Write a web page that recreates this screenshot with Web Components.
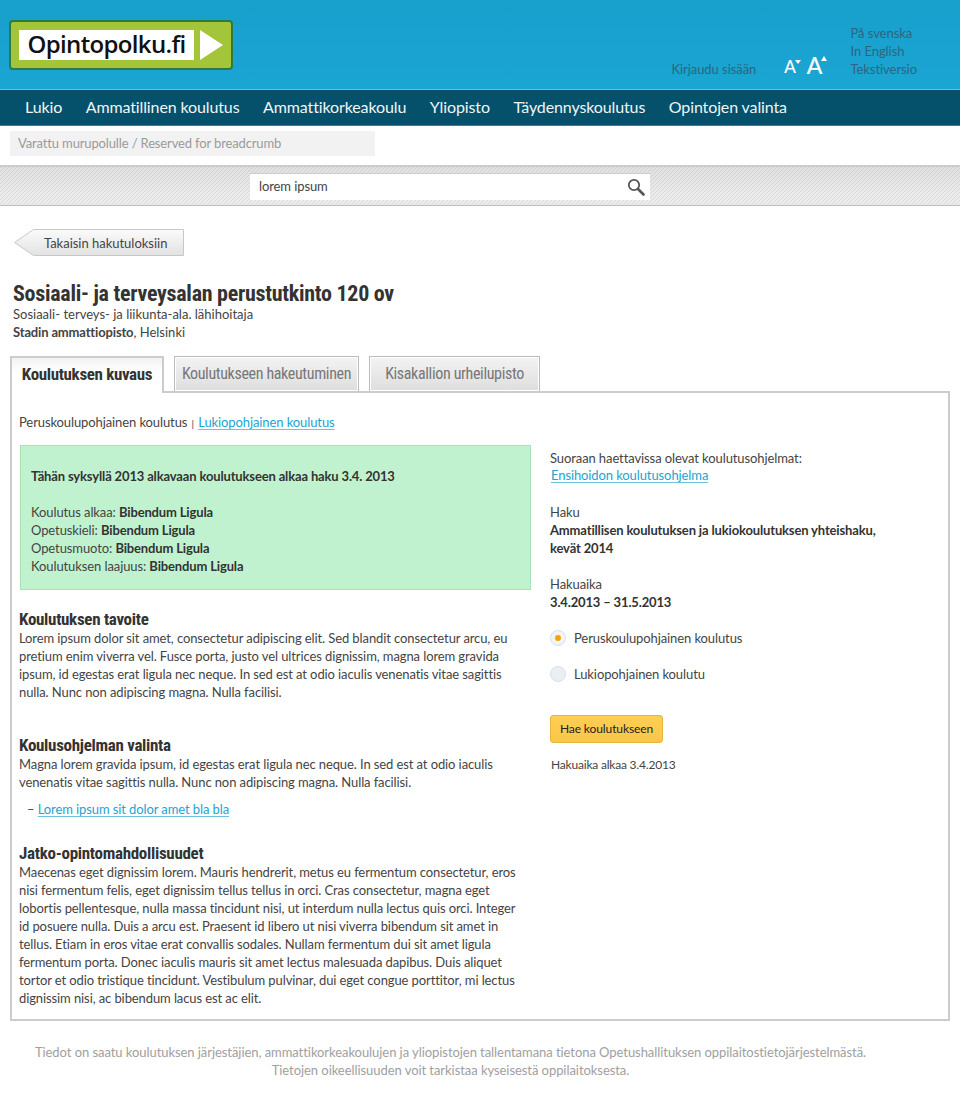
<!doctype html>
<html lang="fi"><head><meta charset="utf-8"><title>Opintopolku</title>
<style>
html,body{margin:0;padding:0;background:#fff}
body{font:13px/18px Lato,"Noto Sans",sans-serif;color:#444;width:960px;overflow-x:hidden;letter-spacing:-.1px}
b{letter-spacing:-.15px;color:#333}
</style></head><body>
<op-header></op-header>
<op-nav>
<op-nav-item>Lukio</op-nav-item><op-nav-item>Ammatillinen koulutus</op-nav-item><op-nav-item>Ammattikorkeakoulu</op-nav-item><op-nav-item>Yliopisto</op-nav-item><op-nav-item>Täydennyskoulutus</op-nav-item><op-nav-item>Opintojen valinta</op-nav-item>
</op-nav>
<op-crumb>Varattu murupolulle / Reserved for breadcrumb</op-crumb>
<op-search></op-search>
<op-back>Takaisin hakutuloksiin</op-back>
<op-title sub="Sosiaali- terveys- ja liikunta-ala. lähihoitaja" org="Stadin ammattiopisto" place=", Helsinki">Sosiaali- ja terveysalan perustutkinto 120 ov</op-title>
<op-tabs>
<op-tab active>Koulutuksen kuvaus</op-tab><op-tab style="--w:185px">Koulutukseen hakeutuminen</op-tab><op-tab style="--w:171px">Kisakallion urheilupisto</op-tab>
</op-tabs>
<op-panel>
<div slot="top">Peruskoulupohjainen koulutus <span style="font-size:10px;margin:0 1px">|</span> <op-link>Lukiopohjainen koulutus</op-link></div>
<div slot="left">
<op-notice>
<b>Tähän syksyllä 2013 alkavaan koulutukseen alkaa haku 3.4. 2013</b><br><br>
Koulutus alkaa: <b>Bibendum Ligula</b><br>
Opetuskieli: <b>Bibendum Ligula</b><br>
Opetusmuoto: <b>Bibendum Ligula</b><br>
Koulutuksen laajuus: <b>Bibendum Ligula</b>
</op-notice>
<op-section style="--top:20px" heading="Koulutuksen tavoite">
Lorem ipsum dolor sit amet, consectetur adipiscing elit. Sed blandit consectetur arcu, eu<br>
pretium enim viverra vel. Fusce porta, justo vel ultrices dignissim, magna lorem gravida<br>
ipsum, id egestas erat ligula nec neque. In sed est at odio iaculis venenatis vitae sagittis<br>
nulla. Nunc non adipiscing magna. Nulla facilisi.
</op-section>
<op-section style="--top:35px" heading="Koulusohjelman valinta">
Magna lorem gravida ipsum, id egestas erat ligula nec neque. In sed est at odio iaculis<br>
venenatis vitae sagittis nulla. Nunc non adipiscing magna. Nulla facilisi.
<op-bullet><op-link>Lorem ipsum sit dolor amet bla bla</op-link></op-bullet>
</op-section>
<op-section style="--top:26px" heading="Jatko-opintomahdollisuudet">
Maecenas eget dignissim lorem. Mauris hendrerit, metus eu fermentum consectetur, eros<br>
nisi fermentum felis, eget dignissim tellus tellus in orci. Cras consectetur, magna eget<br>
lobortis pellentesque, nulla massa tincidunt nisi, ut interdum nulla lectus quis orci. Integer<br>
id posuere nulla. Duis a arcu est. Praesent id libero ut nisi viverra bibendum sit amet in<br>
tellus. Etiam in eros vitae erat convallis sodales. Nullam fermentum dui sit amet ligula<br>
fermentum porta. Donec iaculis mauris sit amet lectus malesuada dapibus. Duis aliquet<br>
tortor et odio tristique tincidunt. Vestibulum pulvinar, dui eget congue porttitor, mi lectus<br>
dignissim nisi, ac bibendum lacus est ac elit.
</op-section>
</div>
<div slot="right">
<op-block style="--top:5px;line-height:17px">Suoraan haettavissa olevat koulutusohjelmat:<br><op-link style="margin-left:1px">Ensihoidon koulutusohjelma</op-link></op-block>
<op-block style="--top:19px">Haku<br><b>Ammatillisen koulutuksen ja lukiokoulutuksen yhteishaku,<br>kevät 2014</b></op-block>
<op-block style="--top:18px">Hakuaika<br><b>3.4.2013 – 31.5.2013</b></op-block>
<op-radio checked style="--top:18px">Peruskoulupohjainen koulutus</op-radio>
<op-radio style="--top:18px">Lukiopohjainen koulutu</op-radio>
<op-button>Hae koulutukseen</op-button>
<op-block style="--top:13px;font-size:12px;margin-left:1px;letter-spacing:-.2px">Hakuaika alkaa 3.4.2013</op-block>
</div>
</op-panel>
<op-footer>Tiedot on saatu koulutuksen järjestäjien, ammattikorkeakoulujen ja yliopistojen tallentamana tietona Opetushallituksen oppilaitostietojärjestelmästä.<br>Tietojen oikeellisuuden voit tarkistaa kyseisestä oppilaitoksesta.</op-footer>
<script>
const NARROW='"Liberation Sans Narrow","Roboto Condensed","Liberation Sans",sans-serif';
function def(name,css,html){
  customElements.define(name,class extends HTMLElement{
    constructor(){super();const r=this.attachShadow({mode:'open'});
      r.innerHTML='<style>'+css+'</style>'+html;}
    connectedCallback(){ if(def.fill[name])def.fill[name](this); }
  });
}
def.fill={
 'op-title':e=>{const s=e.shadowRoot;s.querySelector('.s').textContent=e.getAttribute('sub');s.querySelector('b').textContent=e.getAttribute('org');s.querySelector('.p').textContent=e.getAttribute('place');},
 'op-section':e=>{e.shadowRoot.querySelector('h2').textContent=e.getAttribute('heading');},
 'op-tab':e=>{if(e.hasAttribute('active'))e.shadowRoot.querySelector('div').className='on';},
 'op-radio':e=>{if(e.hasAttribute('checked'))e.shadowRoot.querySelector('.r').classList.add('on');}
};
def('op-header',`
:host{display:flex;height:89px;box-sizing:border-box;background:linear-gradient(#18a0cd,#1ba5d2);color:#2d6580;font-size:13px;line-height:18px;align-items:flex-start;letter-spacing:0}
.logo{margin:20px 0 0 9px;width:224px;height:50px;box-sizing:border-box;background:#a4c439;border:2px solid #2f7a3e;border-radius:4px;display:flex;padding:8px 8px;gap:6px}
.name{width:175px;height:30px;background:#fff;color:#111;font:600 24px/28px "Open Sans",sans-serif;text-align:center;letter-spacing:-.65px}
.tools{margin-left:auto;display:flex;align-items:flex-end;height:78px;padding-right:43px}
.login{margin-right:28px;letter-spacing:-.05px}
.size{display:flex;align-items:flex-end;gap:6px;margin-right:23px;margin-bottom:4px;color:#fff;font-family:Lato,sans-serif;-webkit-text-stroke:.2px #fff}
.a{display:flex;line-height:.8;align-items:flex-start}
.sm{font-size:17px}.lg{font-size:23px}
.t{width:0;height:0;border-left:3px solid transparent;border-right:3px solid transparent}
.sm .t{border-top:4px solid #fff;margin:0 0 0 -1px}
.lg .t{border-bottom:5px solid #fff;margin:0 0 0 -1px}
.langs{letter-spacing:-.05px}
`,`<div class="logo"><div class="name">Opintopolku.fi</div><svg width="23" height="30" viewBox="0 0 23 30"><polygon points="0,0 23,15 0,30" fill="#fff"/></svg></div>
<div class="tools"><div class="login">Kirjaudu sisään</div>
<div class="size"><div class="a sm">A<span class="t"></span></div><div class="a lg">A<span class="t"></span></div></div>
<div class="langs">På svenska<br>In English<br>Tekstiversio</div></div>`);
def('op-nav',`:host{display:flex;height:37px;box-sizing:border-box;background:#05506a;border-top:1px solid #6dbdd8;border-bottom:1px solid #3f7f96;padding-left:25px;gap:23.6px;align-items:flex-start}`,`<slot></slot>`);
def('op-nav-item',`:host{display:block;color:#f0f6f8;font-size:16px;line-height:34px;letter-spacing:-.12px}`,`<slot></slot>`);
def('op-crumb',`:host{display:block;width:365px;height:25px;box-sizing:border-box;margin:5px 0 0 10px;background:#f2f2f2;color:#9a9a9a;font-size:13px;line-height:25px;padding-left:8px;letter-spacing:-.14px}`,`<slot></slot>`);
def('op-search',`:host{display:block;height:41px;box-sizing:border-box;margin-top:9px;padding:6px 0 0 250px;border-top:2px solid #cccccc;border-bottom:1px solid #bdbdbd;background:linear-gradient(rgba(0,0,0,.05),rgba(0,0,0,0) 75%),repeating-linear-gradient(-45deg,#dadada 0 1px,#ececec 1px 2.83px)}
.in{width:400px;height:27px;box-sizing:border-box;background:#fff;border-top:1px solid #ccc;display:flex;align-items:center;justify-content:space-between;padding:0 5px 0 9px;font-size:13px}
.in span{margin-top:-2px}
`,`<div class="in"><span>lorem ipsum</span><svg width="18" height="18" viewBox="0 0 18 18"><circle cx="7" cy="7" r="5.2" fill="none" stroke="#555" stroke-width="1.8"/><path d="M11 11l5.5 5.5" stroke="#555" stroke-width="2.6" stroke-linecap="round"/></svg></div>`);
def('op-back',`:host{display:grid;width:170px;height:28px;margin:23px 0 0 14px;font-size:13px;letter-spacing:-.02px}
svg,.x{grid-area:1/1}.x{padding-left:30px;line-height:28px}`,
`<svg width="170" height="28" viewBox="0 0 170 28"><defs><linearGradient id="g" x1="0" y1="0" x2="0" y2="1"><stop offset="0" stop-color="#fbfbfb"/><stop offset="1" stop-color="#e2e2e2"/></linearGradient></defs><polygon points="0.5,13.5 19.5,0.5 169.5,0.5 169.5,26.5 19.5,26.5" fill="url(#g)" stroke="#c8c8c8"/></svg><div class="x"><slot></slot></div>`);
def('op-title',`:host{display:block;margin:26px 0 0 13px;letter-spacing:0}
h1{margin:0;font:700 22px/22px ${NARROW};color:#333;letter-spacing:-.27px}
.l{line-height:18px}
b{letter-spacing:-.15px}
`,`<h1><slot></slot></h1><div class="l s"></div><div class="l"><b></b><span class="p"></span></div>`);
def('op-tabs',`:host{display:flex;gap:10px;margin:15px 0 -2px 10px;position:relative;z-index:1;align-items:flex-start}`,`<slot></slot>`);
def('op-tab',`:host{display:block;width:var(--w,154px)}
div{box-sizing:border-box;height:35px;border:1px solid #bbb;border-bottom:0;box-shadow:inset 0 0 0 1px #fff;background:linear-gradient(#f3f3f3,#dedede);color:#777;font:400 16px/34px ${NARROW};letter-spacing:-.35px;text-align:center;white-space:nowrap}
div.on{height:37px;border:2px solid #ccc;border-bottom:0;box-shadow:none;background:linear-gradient(#f2f2f2,#fff 14px);color:#333;font-weight:700;font-size:17px;letter-spacing:-.35px;line-height:33px}
`,`<div><slot></slot></div>`);
def('op-panel',`:host{display:block;width:940px;height:630px;box-sizing:border-box;margin-left:10px;border:2px solid #ccc;padding:20px 7px 0}
.g{display:grid;grid-template-columns:512px 1fr;column-gap:19px;margin-top:13px}`,
`<slot name="top"></slot><div class="g"><div><slot name="left"></slot></div><div><slot name="right"></slot></div></div>`);
def('op-link',`:host{display:inline;color:#22a4d0;text-decoration:underline;text-decoration-color:#6cc2e0;text-underline-offset:2px}`,`<slot></slot>`);
def('op-notice',`:host{display:block;margin-left:1px;height:145px;box-sizing:border-box;background:#c1f2cf;border:1px solid #a8e2b8;padding:21px 10px 0}`,`<slot></slot>`);
def('op-section',`:host{display:block;margin-top:var(--top);white-space:nowrap}
h2{margin:0;font:700 17px/19px ${NARROW};color:#333;letter-spacing:-.3px}`,`<h2></h2><slot></slot>`);
def('op-bullet',`:host{display:block;margin:9px 0 0 8px}`,`– <slot></slot>`);
def('op-block',`:host{display:block;margin-top:var(--top);white-space:nowrap}`,`<slot></slot>`);
def('op-radio',`:host{display:flex;align-items:center;gap:8px;margin-top:var(--top);height:18px}
.r{width:16px;height:16px;box-sizing:border-box;border-radius:50%;background:#e9eff3;border:1px solid #d8e0e6;display:flex;align-items:center;justify-content:center}
.r.on{background:#f4f4f4}
.r.on::after{content:"";width:6px;height:6px;border-radius:50%;background:#f0a800}`,`<span class="r"></span><span><slot></slot></span>`);
def('op-button',`:host{display:block;width:113px;height:28px;box-sizing:border-box;margin-top:32px;border:1px solid #e6b445;border-radius:3px;background:linear-gradient(#fdcf55,#fbc648);color:#222;font-size:12px;line-height:26px;text-align:center}`,`<slot></slot>`);
def('op-footer',`:host{display:block;width:901px;margin-top:22px;padding-bottom:29px;text-align:center;color:#a0a0a0;font-size:13px;line-height:18px;letter-spacing:-.06px}`,`<slot></slot>`);
</script>
</body></html>
